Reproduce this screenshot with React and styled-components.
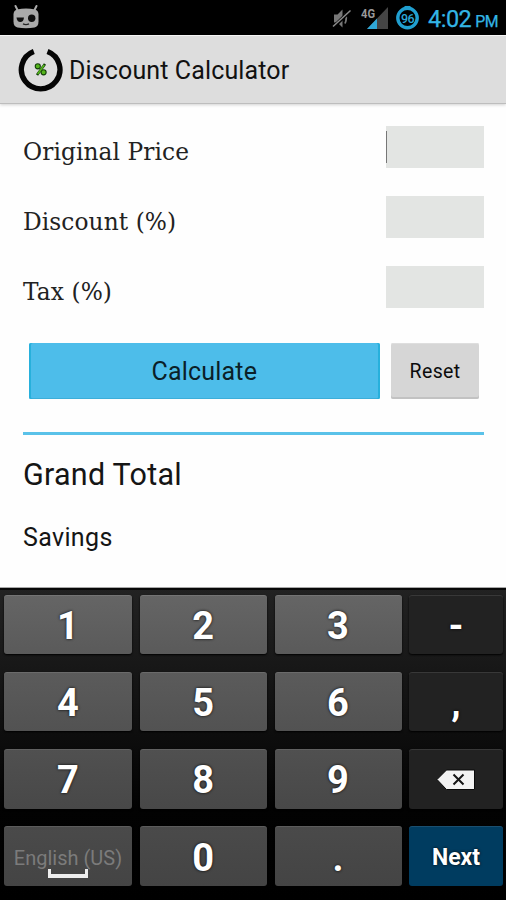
import React from "react";
import styled, { createGlobalStyle } from "styled-components";

const Global = createGlobalStyle`
  * { box-sizing: border-box; }
  body { margin: 0; background: #fff; font-family: Roboto, sans-serif; }
  button, input { font: inherit; border: 0; margin: 0; padding: 0; outline: 0; }
`;

const Screen = styled.div`
  width: 506px;
  height: 900px;
  display: flex;
  flex-direction: column;
  overflow: hidden;
  background: #fefefe;
`;

const StatusBar = styled.header`
  height: 35px;
  flex: none;
  display: flex;
  align-items: flex-start;
  background: #000;
  padding-left: 12px;
`;
const StatusIcon = styled.svg`
  display: block;
  flex: none;
  margin-left: ${(p) => p.$gap || 0}px;
`;
const Spacer = styled.div`
  flex: 1;
`;
const Clock = styled.div`
  width: 78px;
  margin-left: 8px;
  padding-top: 3px;
  color: #33b5e5;
  font-size: 23.5px;
  line-height: 32px;
  letter-spacing: -0.5px;
  white-space: nowrap;
  -webkit-text-stroke: 0.25px #33b5e5;
`;
const Meridiem = styled.span`
  font-size: 15.8px;
  letter-spacing: -0.6px;
  margin-left: 4px;
`;

const TitleBar = styled.div`
  height: 69px;
  flex: none;
  display: flex;
  align-items: center;
  border-top: 1px solid #f6f6f6;
  background: #ddd;
  border-bottom: 1px solid #bdbdbd;
  box-shadow: 0 1px 3px rgba(0, 0, 0, 0.18);
  padding-left: 17px;
`;
const Title = styled.h1`
  margin: 2px 0 0 5px;
  font-weight: 400;
  font-size: 25px;
  line-height: 30px;
  letter-spacing: 0.13px;
  color: #111;
`;

const Content = styled.main`
  height: 484px;
  flex: none;
  padding: 21.6px 22px 0 23px;
`;
const FieldRow = styled.label`
  display: flex;
  justify-content: space-between;
  height: 70.3px;
`;
const FieldName = styled.span`
  font-family: "DejaVu Serif", serif;
  font-size: 23.3px;
  line-height: 30px;
  padding-top: 11px;
  letter-spacing: 0.08px;
  color: #222;
`;
const FieldBox = styled.span`
  display: flex;
  align-items: center;
  height: 42px;
  background: #e3e5e3;
`;
const Field = styled.input`
  width: 98px;
  height: 42px;
  background: transparent;
`;
const Caret = styled.i`
  width: 1px;
  height: 32px;
  margin: 0 -1px 0 0;
  background: #777;
`;

const Actions = styled.div`
  display: flex;
  gap: 11px;
  padding: 6.5px 5px 0 5.5px;
`;
const Button = styled.button`
  height: 56px;
  width: ${(p) => (p.$primary ? 352 : 88)}px;
  border-radius: 2px;
  background: ${(p) => (p.$primary ? "#4dbdea" : "#d6d6d6")};
  box-shadow: ${(p) =>
    p.$primary
      ? "inset 2px 0 #27b0dc, inset -2px 0 #27b0dc, inset 0 -1px #3caed9"
      : "inset 0 -2px #c2c2c2, inset 0 1px #dedede"};
  font-size: ${(p) => (p.$primary ? 25 : 19.5)}px;
  letter-spacing: ${(p) => (p.$primary ? 0.2 : 0.4)}px;
  color: ${(p) => (p.$primary ? "#0b1f28" : "#0c0c0c")};
  padding-top: 1px;
`;
const Divider = styled.hr`
  height: 3px;
  margin: 33px 0 0;
  border: 0;
  background: #5ac2e9;
`;
const Result = styled.div`
  font-size: ${(p) => p.$size}px;
  line-height: 40px;
  letter-spacing: ${(p) => p.$tracking}px;
  margin-top: ${(p) => p.$top}px;
  color: #151515;
`;

const Keyboard = styled.section`
  flex: 1;
  display: grid;
  grid-template-columns: 128px 127.5px 127px 94px;
  grid-template-rows: repeat(4, 59.5px);
  column-gap: 7.5px;
  row-gap: 17.8px;
  padding: 6.5px 3px 0 4px;
  background: linear-gradient(#222 0, #181818 75px, #0d0d0d 150px, #020202 220px, #000 100%);
  box-shadow: inset 0 2px #080808, 0 -1px #a8a8a8;
`;
const keyFill = {
  r0: "linear-gradient(#656565, #5a5a5a)",
  r1: "linear-gradient(#5b5b5b, #525252)",
  r2: "linear-gradient(#505050, #484848)",
  r3: "linear-gradient(#4a4a4a, #444)",
  dark: "#222",
  next: "#003c60",
};
const Key = styled.button`
  display: flex;
  flex-direction: column;
  align-items: center;
  justify-content: center;
  border-radius: 3px;
  background: ${(p) => keyFill[p.$fill]};
  box-shadow: inset 0 1px rgba(255, 255, 255, 0.1), 0 1px 2px #000;
  color: #fff;
  font-weight: 700;
  font-size: ${(p) => p.$size || 38}px;
  line-height: 40px;
  text-shadow: 0 0 3px #000;
  padding-top: 3px;
`;
const Language = styled.span`
  font-weight: 400;
  font-size: 20px;
  line-height: 24px;
  padding-top: 8px;
  color: #7b7b7b;
  text-shadow: none;
  white-space: nowrap;
`;
const SpaceMark = styled.span`
  width: 40px;
  height: 9px;
  margin-top: -1px;
  border: solid #eee;
  border-width: 0 3px 4px;
`;

const fields = [
  { name: "Original Price", active: true },
  { name: "Discount (%)" },
  { name: "Tax (%)" },
];

const rows = [
  ["1", "2", "3", "-"],
  ["4", "5", "6", ","],
  ["7", "8", "9", "del"],
  ["lang", "0", ".", "Next"],
];

function Robot() {
  return (
    <StatusIcon width="28" height="30" viewBox="12 0 28 30">
      <path d="M15.500 6l2.500 5M36.500 6l-2.500 5" stroke="#aaa" strokeWidth="2" strokeLinecap="round" />
      <path d="M17 9.500q9-2 18 0 3.500 1 3.500 5v7q0 5-4 6-8.500 1.500-17 0-4-1-4-6v-7q0-4 3.500-5z" fill="#aaa" />
      <path d="M16.500 17.500h7.500q-.5 4.500-3.700 4.500t-3.800-4.500z" fill="#111" />
      <circle cx="31.700" cy="18.300" r="3.700" fill="#111" />
      <path d="M23 23.800q3 1.500 6 0" stroke="#222" strokeWidth="1.300" fill="none" />
    </StatusIcon>
  );
}

function Muted() {
  return (
    <StatusIcon width="20" height="32" viewBox="333 0 20 32">
      <path d="M335 14.500h3.500l5-5v18l-5-5h-3.500z" fill="#777" />
      <path d="M346 13.500q2.500 4.500 0 10" stroke="#777" strokeWidth="1.800" fill="none" />
      <path d="M335 26.500l16-15.500" stroke="#000" strokeWidth="3.600" />
      <path d="M334 26.500l17.500-16" stroke="#8b8b8b" strokeWidth="1.500" />
    </StatusIcon>
  );
}

function Signal() {
  return (
    <StatusIcon $gap={9} width="27" height="32" viewBox="362 0 27 32">
      <path d="M389 7v22h-21z" fill="#454545" />
      <path d="M378 18.500v10.500h-10z" fill="#2fa8d8" />
      <text x="362" y="17.500" fontFamily="Roboto" fontWeight="700" fontSize="13" textLength="14" lengthAdjust="spacingAndGlyphs" fill="#999">4G</text>
    </StatusIcon>
  );
}

function Battery() {
  return (
    <StatusIcon $gap={8} width="24" height="32" viewBox="397 0 24 32">
      <circle cx="408.500" cy="18" r="9.700" fill="none" stroke="#209fd0" strokeWidth="3.400" />
      <path d="M405.500 6.700h6" stroke="#209fd0" strokeWidth="1.500" />
      <text x="408.500" y="22.500" textAnchor="middle" fontFamily="Roboto" fontWeight="500" fontSize="12.500" letterSpacing="-.6" fill="#2aa6d6">96</text>
    </StatusIcon>
  );
}

function Logo() {
  return (
    <svg width="47" height="50" viewBox="17 44.500 47 50">
      <path d="M33.800 51A19.300 19.300 0 1 0 47.500 51" fill="none" stroke="#050505" strokeWidth="5.300" />
      <g fill="none" stroke="#123d08" strokeWidth="2.600">
        <circle cx="37.800" cy="65.800" r="1.800" />
        <circle cx="43.600" cy="71.800" r="1.800" />
        <path d="M45 63.500l-8 11" />
      </g>
      <g fill="#55b51c" stroke="#55b51c" strokeWidth="1.700">
        <circle cx="37.800" cy="65.800" r="1.200" />
        <circle cx="43.600" cy="71.800" r="1.200" />
        <path d="M44.200 64.500l-6.500 9" />
      </g>
    </svg>
  );
}

function DeleteIcon() {
  return (
    <svg width="40" height="24" viewBox="0 0 40 24">
      <path d="M1 11.500L10.500 2H38.500V21.500H10.500z" fill="#f3f3f3" stroke="#0a0a0a" />
      <path d="M17.500 6.500l10 10M27.500 6.500l-10 10" stroke="#161616" strokeWidth="2" />
    </svg>
  );
}

function KeyCap({ value, row, last }) {
  if (value === "del")
    return <Key $fill="dark" aria-label="Delete"><DeleteIcon /></Key>;
  if (value === "lang")
    return (
      <Key $fill="r3">
        <Language>English (US)</Language>
        <SpaceMark />
      </Key>
    );
  if (value === "Next") return <Key $fill="next" $size={23}>{value}</Key>;
  return <Key $fill={last ? "dark" : "r" + row}>{value}</Key>;
}

export default function App() {
  return (
    <Screen>
      <Global />
      <StatusBar>
        <Robot />
        <Spacer />
        <Muted />
        <Signal />
        <Battery />
        <Clock>4:02<Meridiem>PM</Meridiem></Clock>
      </StatusBar>
      <TitleBar>
        <Logo />
        <Title>Discount Calculator</Title>
      </TitleBar>
      <Content>
        {fields.map((f) => (
          <FieldRow key={f.name}>
            <FieldName>{f.name}</FieldName>
            <FieldBox>
              {f.active && <Caret />}
              <Field />
            </FieldBox>
          </FieldRow>
        ))}
        <Actions>
          <Button $primary>Calculate</Button>
          <Button>Reset</Button>
        </Actions>
        <Divider />
        <Result $size={30.5} $tracking={0.25} $top={20}>Grand Total</Result>
        <Result $size={25} $tracking={0.35} $top={23.5}>Savings</Result>
      </Content>
      <Keyboard>
        {rows.map((keys, r) =>
          keys.map((k, c) => <KeyCap key={k} value={k} row={r} last={c === 3} />)
        )}
      </Keyboard>
    </Screen>
  );
}
